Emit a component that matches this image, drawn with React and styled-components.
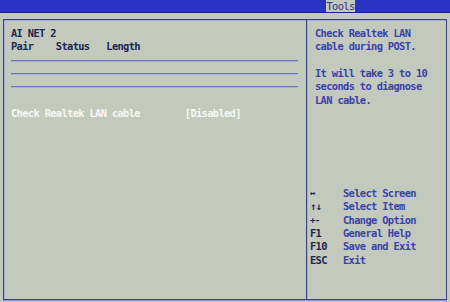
import React from 'react'
import styled, { createGlobalStyle } from 'styled-components'

const GlobalStyle = createGlobalStyle`
  html, body {
    margin: 0;
    padding: 0;
    background: #c3c9bd;
  }
`

const Screen = styled.div`
  width: 450px;
  height: 302px;
  background: #c3c9bd;
  font-family: "DejaVu Sans Mono", "Liberation Mono", monospace;
  font-weight: bold;
  font-size: 10.4px;
  letter-spacing: -0.65px;
  line-height: 13.33px;
  display: flex;
  flex-direction: column;
  overflow: hidden;
`

const MenuBar = styled.div`
  height: 12px;
  background: #2b33c4;
  border-bottom: 1px solid #1d2490;
  display: flex;
  padding-left: 326px;
`

const Tab = styled.div`
  width: 29px;
  height: 12px;
  background: ${p => (p.active ? '#c3c9bd' : 'transparent')};
  color: #2a3390;
  line-height: 13px;
  text-align: center;
  font-weight: normal;
`

const Frame = styled.div`
  margin: 6px 3px 2px 3px;
  flex: 1;
  border: 1px solid #3a4282;
  box-shadow: inset 1px 1px 0 #a6acd8, 0 1px 0 #8d94cc;
  display: grid;
  grid-template-columns: 302px 1fr;
`

const MainPanel = styled.div`
  padding: 7px 8px 0 7px;
  color: #1c2652;
`

const Line = styled.div`
  height: 13.33px;
  white-space: pre;
  color: ${p => p.color || 'inherit'};
`

const Rule = styled.div`
  height: 13.33px;
  display: flex;
  align-items: center;

  &::after {
    content: '';
    flex: 1;
    height: 1px;
    background: #6d74bd;
    box-shadow: 0 1px 0 #aab0d4;
  }
`

const HelpPanel = styled.div`
  border-left: 1px solid #3a4282;
  box-shadow: inset 1px 0 0 #a6acd8;
  padding: 7px 6px 0 8px;
  display: flex;
  flex-direction: column;
  color: #3a42ac;
`

const HelpText = styled.div`
  flex: 1;
`

const KeyList = styled.div`
  margin-bottom: 32px;
  margin-left: -5px;
`

const KeyRow = styled.div`
  display: grid;
  grid-template-columns: 33px 1fr;
  height: 13.33px;
`

const Key = styled.span`
  color: #1c2652;
  font-size: ${p => (p.small ? '9px' : 'inherit')};
`

const keys = [
  ['↔', 'Select Screen', true],
  ['↑↓', 'Select Item'],
  ['+-', 'Change Option', true],
  ['F1', 'General Help'],
  ['F10', 'Save and Exit'],
  ['ESC', 'Exit'],
]

export default function App() {
  return (
    <>
      <GlobalStyle />
      <Screen>
        <MenuBar>
          <Tab active>Tools</Tab>
        </MenuBar>
        <Frame>
          <MainPanel>
            <Line>AI NET 2</Line>
            <Line>{'Pair    Status   Length'}</Line>
            <Rule />
            <Rule />
            <Rule />
            <Line />
            <Line color="#f6f8f4">{'Check Realtek LAN cable        [Disabled]'}</Line>
          </MainPanel>
          <HelpPanel>
            <HelpText>
              <Line>Check Realtek LAN</Line>
              <Line>cable during POST.</Line>
              <Line />
              <Line>It will take 3 to 10</Line>
              <Line>seconds to diagnose</Line>
              <Line>LAN cable.</Line>
            </HelpText>
            <KeyList>
              {keys.map(([k, label, small]) => (
                <KeyRow key={k}>
                  <Key small={small}>{k}</Key>
                  <span>{label}</span>
                </KeyRow>
              ))}
            </KeyList>
          </HelpPanel>
        </Frame>
      </Screen>
    </>
  )
}
